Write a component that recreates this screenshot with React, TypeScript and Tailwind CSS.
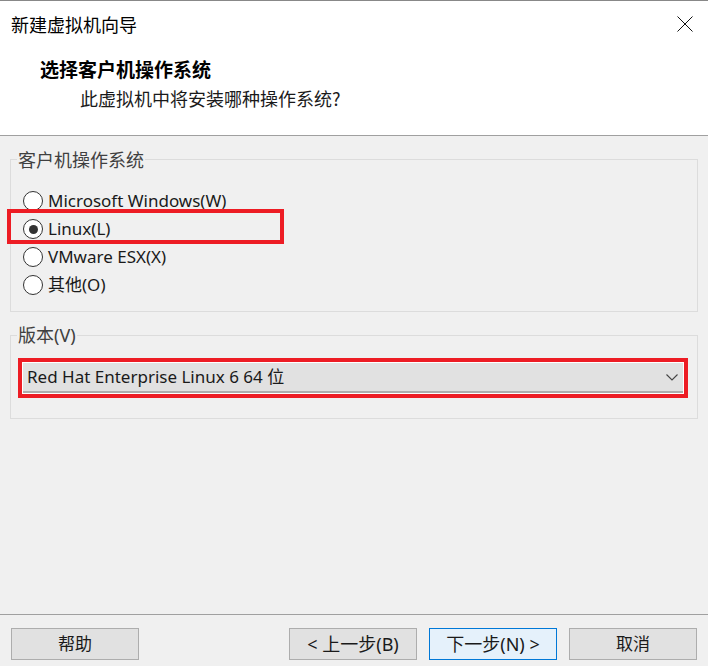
import React from 'react';

const latin = "font-['Noto_Sans','Noto_Sans_CJK_SC',sans-serif]";
const cjk = "font-['Noto_Sans_CJK_SC','Noto_Sans',sans-serif]";

const OS_OPTIONS = [
  { id: 'windows', label: 'Microsoft Windows(W)' },
  { id: 'linux', label: 'Linux(L)' },
  { id: 'esx', label: 'VMware ESX(X)' },
  { id: 'other', label: '其他(O)' },
];

const Radio: React.FC<{ checked?: boolean }> = ({ checked }) => (
  <span className="flex h-[20px] w-[20px] flex-shrink-0 items-center justify-center rounded-full border border-[#333333] bg-white">
    {checked && <span className="h-[9px] w-[9px] rounded-full bg-[#333333]" />}
  </span>
);

const WizardButton: React.FC<{ label: string; primary?: boolean; size?: string }> = ({ label, primary, size }) => (
  <button
    className={
      primary
        ? `h-[32px] w-[128px] border border-[#0078d7] bg-[#e5f1fb] text-[#1a1a1a] ${size ?? 'text-[18px]'} ${latin}`
        : `h-[32px] w-[128px] border border-[#adadad] bg-[#e1e1e1] text-[#1a1a1a] ${size ?? 'text-[18px]'} ${latin}`
    }
  >
    {label}
  </button>
);

export default function App() {
  return (
    <div className="flex h-[666px] w-[708px] flex-col border-t border-[#888888] bg-[#f0f0f0] text-[#1a1a1a]">
      {/* header */}
      <div className="h-[135px] border-b border-[#a0a0a0] bg-white">
        <div className="mt-[11px] flex h-[24px] items-center justify-between pl-[11px] pr-[15px]">
          <span className={`text-[18px] leading-[24px] text-black ${cjk}`}>新建虚拟机向导</span>
          <svg width="16" height="16" viewBox="0 0 16 16" aria-hidden="true">
            <path d="M0.5 0.5 L15.5 15.5 M15.5 0.5 L0.5 15.5" stroke="#111" strokeWidth="1" fill="none" />
          </svg>
        </div>
        <h1 className={`mt-[20px] pl-[40px] text-[19px] font-bold leading-[26px] text-black ${cjk}`}>
          选择客户机操作系统
        </h1>
        <p className={`mt-[3px] pl-[80px] text-[18px] leading-[26px] text-[#1a1a1a] ${cjk}`}>
          此虚拟机中将安装哪种操作系统?
        </p>
      </div>

      {/* guest OS */}
      <fieldset className="mx-[10px] mt-[12px] border border-[#dcdcdc] pb-[12px] pt-[17px]">
        <legend className={`ml-[6px] px-[1px] text-[18px] leading-[22px] text-[#404040] ${cjk}`}>客户机操作系统</legend>
        {OS_OPTIONS.map((opt) => (
          <div key={opt.id} className="relative flex h-[28px] items-center pl-[12px]">
            <Radio checked={opt.id === 'linux'} />
            <span className={`ml-[5px] text-[17px] leading-[24px] ${latin}`}>{opt.label}</span>
            {opt.id === 'linux' && (
              <span className="pointer-events-none absolute left-[-4px] top-[-6px] h-[35px] w-[277px] border-4 border-[#ed1c24]" />
            )}
          </div>
        ))}
      </fieldset>

      {/* version */}
      <fieldset className="mx-[10px] mt-[12px] border border-[#dcdcdc] pb-[20px] pt-[12px]">
        <legend className={`ml-[6px] px-[1px] text-[18px] leading-[22px] text-[#404040] ${latin}`}>版本(V)</legend>
        <div className="ml-[7px] mr-[9px] border-4 border-[#ed1c24] bg-white p-[1px]">
          <div className="flex h-[30px] items-center justify-between border-b-2 border-[#adadad] bg-[#e1e1e1] pl-[4px] pr-[5px]">
            <span className={`text-[17px] leading-[24px] ${latin}`}>Red Hat Enterprise Linux 6 64 位</span>
            <svg width="12" height="7" viewBox="0 0 12 7" aria-hidden="true">
              <path d="M0.5 0.5 L6 6 L11.5 0.5" stroke="#444" strokeWidth="1.1" fill="none" />
            </svg>
          </div>
        </div>
      </fieldset>

      <div className="flex-1" />

      {/* footer */}
      <div className="flex h-[52px] items-start justify-between border-t border-[#a0a0a0] px-[11px] pt-[13px]">
        <WizardButton label="帮助" size="text-[17px]" />
        <div className="flex gap-[12px]">
          <WizardButton label="< 上一步(B)" />
          <WizardButton label="下一步(N) >" primary />
          <WizardButton label="取消" size="text-[17px]" />
        </div>
      </div>
    </div>
  );
}
